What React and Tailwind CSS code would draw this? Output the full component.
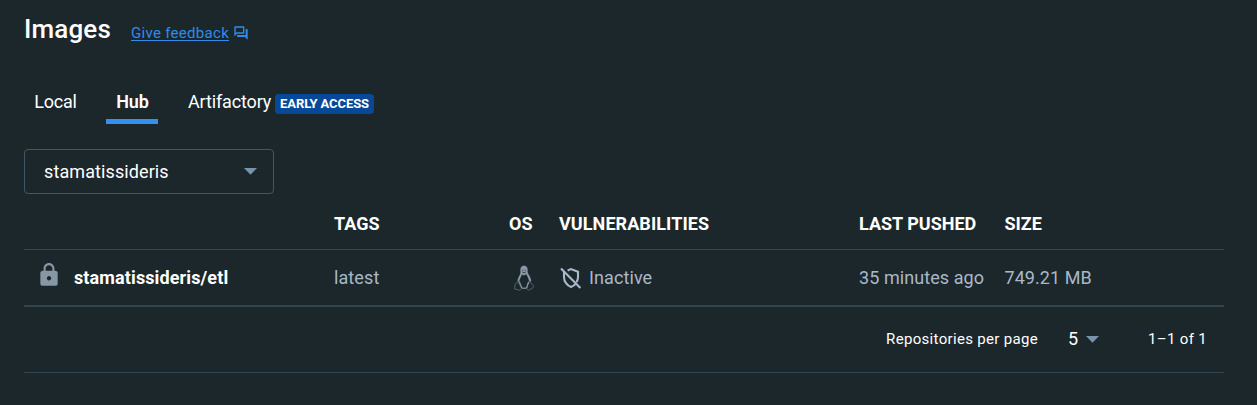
import { MdLock, MdOutlineForum } from "react-icons/md";

function Caret() {
  return (
    <svg className="h-[7px] w-[13px] shrink-0 fill-[#7794ab]" viewBox="0 0 13 7">
      <path d="M0 0h13L6.5 6.8z" />
    </svg>
  );
}

function ShieldOff() {
  return (
    <svg className="size-6" viewBox="0 0 24 24" fill="none" stroke="currentColor" strokeWidth="2.1">
      <path d="M2 2.500 21.400 22" />
      <path d="M8.600 4.400 12 3.100l7 2.600V11c0 2-.5 3.700-1.500 5.300" />
      <path d="M5 6v5c0 4.600 3 8.700 7 9.900 2-.6 3.600-1.700 4.900-3.300" />
    </svg>
  );
}

function Penguin() {
  return (
    <svg className="ml-[5px] h-[26px] w-5" viewBox="0 0 20 26" fill="none">
      <path d="M6.500 7C6 3 7.100.8 10 .8s4 2.200 3.600 5.600c0 2.400 3.300 5 3.700 9.600l-1.900 1.200C14.800 13.600 13.100 11 12.300 9.300L10 10.500 7.900 9.400C7.300 11.500 5.400 14 5.100 17.200L3.400 16C3.700 12.500 6.500 10 6.500 7z" fill="#8797a3" />
      <path d="M8.300 5.200h.9m1.500 0h.9M8.500 7l1.500.9L11.700 7" stroke="#34434c" strokeWidth="1" />
      <path d="M4.300 16.500 1 19.300l-.4 4.500 5.200 1.500 2-1.800-3.500-6zM15.700 16.500l3.700 4.400-.3 1.800-4.500 2.600-1.900-1.500.8-6z" stroke="#50616c" strokeWidth="1" />
      <path d="M5.200 16.500 7.800 22.800c1.500.7 3.300.6 4.900 0l2.200-6" stroke="#8495a1" strokeWidth="1.200" />
    </svg>
  );
}

const columns = "grid grid-cols-[50px_260px_175px_50px_300px_145.5px_1fr]";

export default function App() {
  return (
    <main className="h-[405px] w-[1257px] overflow-hidden bg-[#1c272c] pl-6 pr-[33px] font-['Roboto',sans-serif] text-lg text-white">
      <header className="flex h-[82px] items-start">
        <h1 className="mt-[13px] w-[107px] text-[26px] leading-8 font-medium tracking-[0.15px]">Images</h1>
        <a href="#" className="mt-[22px] flex items-center gap-1 text-[15px] leading-[22px] tracking-[0.3px] text-[#2f8ced]">
          <span className="underline underline-offset-2">Give feedback</span>
          <MdOutlineForum className="size-4" />
        </a>
      </header>

      <nav className="flex h-[42px]">
        <button className="h-10 w-[82px] pr-[19px] tracking-[-0.2px]">Local</button>
        <button className="h-[42px] w-[52px] border-b-[5px] border-[#3191ec] pt-[3px] pl-px font-semibold tracking-[-0.2px]">Hub</button>
        <button className="ml-[30px] flex h-10 items-center gap-[5px]">
          <span className="w-[82px] tracking-[-0.15px] whitespace-nowrap">Artifactory</span>
          <span className="mt-1 flex h-5 w-[99px] items-center justify-center rounded bg-[#084899] text-[13px] font-bold tracking-[-0.08px]">EARLY ACCESS</span>
        </button>
      </nav>

      <button className="mt-[25px] flex h-[45px] w-[250px] items-center justify-between rounded border border-[#415767] pl-[19px] pr-4">
        <span className="tracking-[0.1px]">stamatissideris</span>
        <Caret />
      </button>

      <section>
        <div className={`${columns} h-14 items-center border-b border-[#334550] pt-[5px] font-bold`}>
          <span className="col-start-3">TAGS</span>
          <span>OS</span>
          <span className="tracking-[0.08px]">VULNERABILITIES</span>
          <span>LAST PUSHED</span>
          <span>SIZE</span>
        </div>
        <div className={`${columns} h-[57px] items-center border-b-2 border-[#334550] text-[#aab8c8]`}>
          <MdLock className="mb-[5px] ml-3 size-[26px] text-[#8797a3]" />
          <span className="font-bold tracking-[0.12px] text-white">stamatissideris/etl</span>
          <span className="tracking-[0.1px]">latest</span>
          <Penguin />
          <span className="flex items-center gap-[6px] tracking-[0.1px]">
            <ShieldOff />
            Inactive
          </span>
          <span className="tracking-[0.07px]">35 minutes ago</span>
          <span className="tracking-[0.07px]">749.21 MB</span>
        </div>
        <footer className="flex h-[66px] items-center justify-end border-b border-[#334550] pr-[17px] text-[15px]">
          <span className="tracking-[0.32px]">Repositories per page</span>
          <span className="ml-[30px] flex items-center gap-2 pb-px text-lg">5 <Caret /></span>
          <span className="ml-[49px] tracking-[0.32px]">1–1 of 1</span>
        </footer>
      </section>
    </main>
  );
}
